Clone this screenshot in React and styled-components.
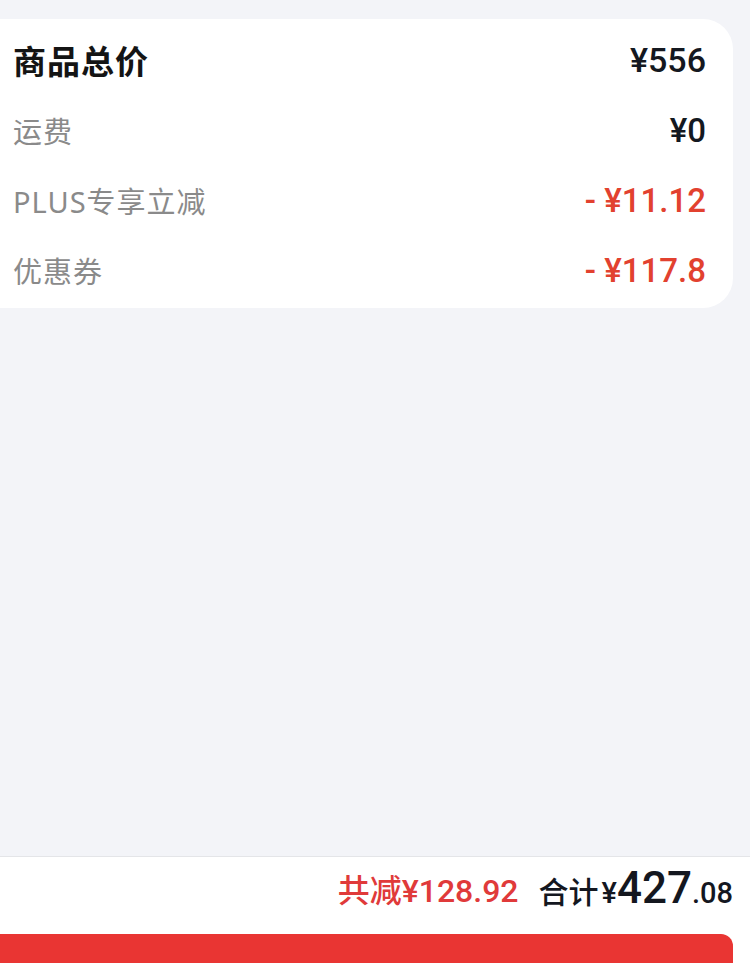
import React from "react";
import styled, { createGlobalStyle } from "styled-components";

const Global = createGlobalStyle`
  html, body { margin: 0; padding: 0; }
  body {
    background: #f3f4f8;
    font-family: "Noto Sans", "Noto Sans CJK SC", sans-serif;
  }
`;

const Page = styled.div`
  height: 100vh;
  overflow: hidden;
  display: flex;
  flex-direction: column;
  background: #f3f4f8;
`;

const Card = styled.div`
  margin: 19px 17px 0 -30px;
  padding: 6px 27px 3px 43px;
  background: #fff;
  border-radius: 30px;
`;

const Row = styled.div`
  height: 70px;
  display: flex;
  align-items: center;
  justify-content: space-between;
`;

const Label = styled.span`
  font-family: "Noto Sans", "Noto Sans CJK SC", sans-serif;
  font-size: ${(p) => (p.$main ? "33px" : "29px")};
  font-weight: ${(p) => (p.$main ? 700 : 400)};
  color: ${(p) => (p.$main ? "#141414" : "#8a8a8a")};
  letter-spacing: 1px;
`;

const Value = styled.span`
  font-family: Roboto, "Noto Sans CJK SC", sans-serif;
  font-size: ${(p) => p.$size || "33px"};
  font-weight: 500;
  color: ${(p) => (p.$red ? "#e2412f" : "#141820")};
`;

const Spacer = styled.div`
  flex: 1;
`;

const Footer = styled.div`
  flex-shrink: 0;
  height: 106px;
  background: #fff;
  border-top: 1px solid #e4e5e8;
  overflow: hidden;
`;

const TotalRow = styled.div`
  box-sizing: border-box;
  height: 77px;
  padding: 0 17px 16px 0;
  display: flex;
  align-items: center;
  justify-content: flex-end;
  gap: 20px;
`;

const Saved = styled.span`
  font-family: Roboto, "Noto Sans CJK SC", sans-serif;
  font-size: 32px;
  font-weight: 500;
  color: #e03a3a;
`;

const Sum = styled.span`
  display: flex;
  align-items: baseline;
  color: #14171f;
  font-family: Roboto, "Noto Sans CJK SC", sans-serif;
`;

const SumLabel = styled.span`
  font-family: "Noto Sans CJK SC", sans-serif;
  font-size: 30px;
  font-weight: 500;
  margin-right: 3px;
`;

const SumPart = styled.span`
  font-size: ${(p) => p.$size};
  font-weight: 500;
`;

const PayButton = styled.button`
  display: block;
  height: 80px;
  width: calc(100% + 13px);
  margin: 0 0 0 -30px;
  border: none;
  border-radius: 12px;
  background: #e93533;
`;

const rows = [
  { label: "运费", value: "¥0" },
  { label: "PLUS专享立减", value: "- ¥11.12", red: true },
  { label: "优惠券", value: "- ¥117.8", red: true },
];

export default function App() {
  return (
    <>
      <Global />
      <Page>
        <Card>
          <Row>
            <Label $main>商品总价</Label>
            <Value $size="34px">¥556</Value>
          </Row>
          {rows.map((r) => (
            <Row key={r.label}>
              <Label>{r.label}</Label>
              <Value $red={r.red}>{r.value}</Value>
            </Row>
          ))}
        </Card>
        <Spacer />
        <Footer>
          <TotalRow>
            <Saved>共减¥128.92</Saved>
            <Sum>
              <SumLabel>合计</SumLabel>
              <SumPart $size="29px">¥</SumPart>
              <SumPart $size="44px">427</SumPart>
              <SumPart $size="29px">.08</SumPart>
            </Sum>
          </TotalRow>
          <PayButton aria-label="提交订单" />
        </Footer>
      </Page>
    </>
  );
}
